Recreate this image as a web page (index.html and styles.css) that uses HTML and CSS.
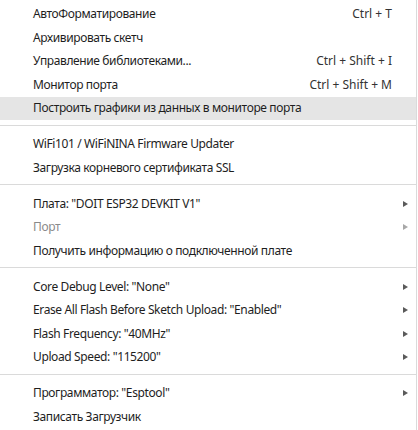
FILE: index.html
```
<!DOCTYPE html>
<html>
<head>
    <title>Инструменты</title>
    <link rel="stylesheet" href="styles.css">
</head>
<body>
    <div class="menu">
        <div class="item"><span class="label">АвтоФорматирование</span><span class="key">Ctrl + T</span></div>
        <div class="item"><span class="label">Архивировать скетч</span></div>
        <div class="item"><span class="label">Управление библиотеками...</span><span class="key">Ctrl + Shift + I</span></div>
        <div class="item"><span class="label">Монитор порта</span><span class="key">Ctrl + Shift + M</span></div>
        <div class="item active"><span class="label">Построить графики из данных в мониторе порта</span></div>

        <div class="sep"></div>

        <div class="item"><span class="label">WiFi101 / WiFiNINA Firmware Updater</span></div>
        <div class="item"><span class="label">Загрузка корневого сертификата SSL</span></div>

        <div class="sep"></div>

        <div class="item"><span class="label">Плата: "DOIT ESP32 DEVKIT V1"</span><span class="arrow"></span></div>
        <div class="item disabled"><span class="label">Порт</span><span class="arrow"></span></div>
        <div class="item"><span class="label">Получить информацию о подключенной плате</span></div>

        <div class="sep"></div>

        <div class="item"><span class="label">Core Debug Level: "None"</span><span class="arrow"></span></div>
        <div class="item"><span class="label">Erase All Flash Before Sketch Upload: "Enabled"</span><span class="arrow"></span></div>
        <div class="item"><span class="label">Flash Frequency: "40MHz"</span><span class="arrow"></span></div>
        <div class="item"><span class="label">Upload Speed: "115200"</span><span class="arrow"></span></div>

        <div class="sep"></div>

        <div class="item"><span class="label">Программатор: "Esptool"</span><span class="arrow"></span></div>
        <div class="item"><span class="label">Записать Загрузчик</span></div>
    </div>
</body>
</html>
```
FILE: styles.css
```
body {
    margin: 0;
    background: #fff;
    font-family: "Noto Sans", sans-serif;
    font-size: 12px;
    letter-spacing: -0.38px;
    color: #1e1e1e;
}

.menu {
    width: 417px;
    height: 430px;
    box-sizing: border-box;
    padding-top: 2.5px;
    border-right: 1px solid #dadada;
    overflow: hidden;
}

.item {
    display: grid;
    grid-template-columns: 1fr auto 24px;
    align-items: center;
    height: 23.5px;
    padding-left: 33px;
    white-space: nowrap;
}

.item .label {
    padding-bottom: 1px;
}

.item .key {
    color: #333;
    letter-spacing: 0;
    padding-bottom: 1px;
}

.item.active {
    background: #e5e5e5;
}

.item.disabled {
    color: #8a8a8a;
}

.arrow {
    grid-column: 3;
    width: 0;
    height: 0;
    margin-left: 11px;
    border-left: 5px solid #5a5a5a;
    border-top: 3.5px solid transparent;
    border-bottom: 3.5px solid transparent;
}

.disabled .arrow {
    border-left-color: #a8a8a8;
}

.sep {
    height: 1px;
    margin: 4.5px 0 7px;
    background: #dadada;
}
```
